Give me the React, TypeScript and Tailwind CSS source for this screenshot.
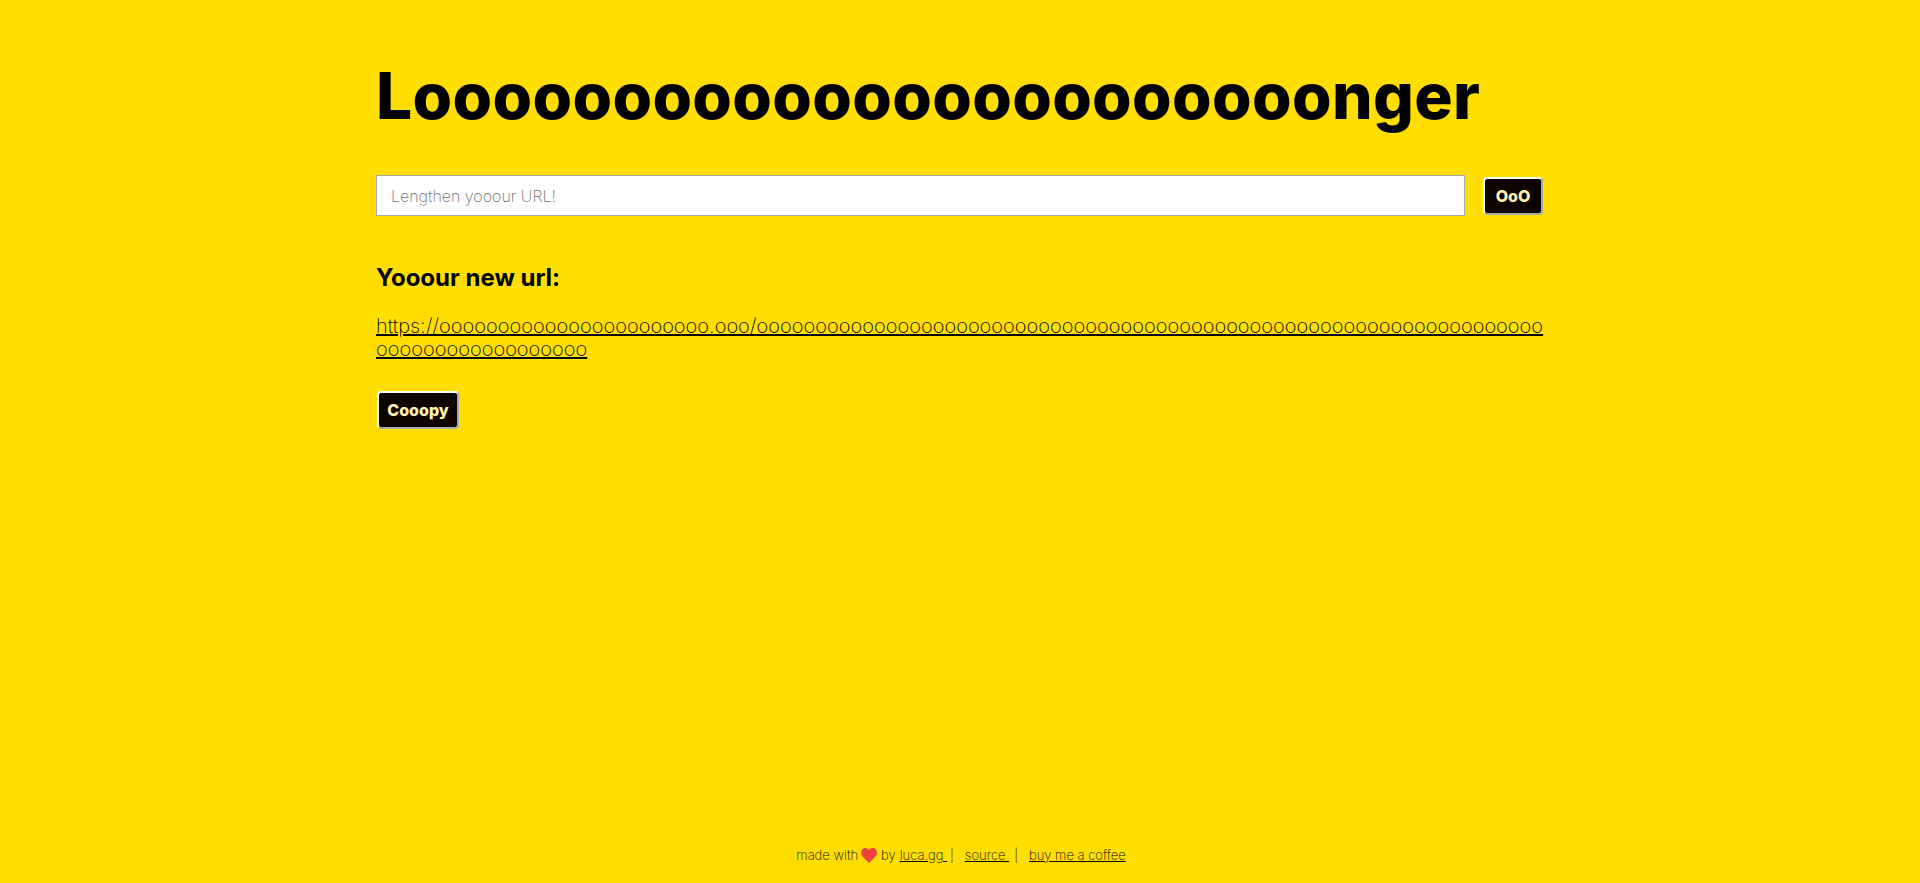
export default function App() {
  const f = { fontFamily: "Inter, sans-serif" };
  const url = "https://" + "o".repeat(23) + ".ooo/" + "o".repeat(85);
  return (
    <div style={f} className="min-h-[883px] bg-[#ffde00] text-black flex flex-col items-center">
      <main className="w-[1168px] flex-1">
        <h1 className="mt-[49px] text-[64px] leading-[94px] font-extrabold tracking-[0.35px] whitespace-nowrap">Looooooooooooooooooooooonger</h1>
        <div className="mt-[32px] flex items-center">
          <input
            readOnly
            placeholder="Lengthen yooour URL!"
            className="w-[1089px] h-[41px] bg-white border border-[#a9a9a9] px-[14px] text-[16px] font-extralight placeholder:text-[#707070] outline-none"
          />
          <button className="ml-[18px] w-[60px] h-[38px] bg-[#0f0500] text-[#fff3b0] font-extrabold text-[16px] rounded-[4px] border-2 border-t-white border-l-white border-r-[#a9a9a9] border-b-[#a9a9a9]">OoO</button>
        </div>
        <h2 className="mt-[46px] text-[24px] leading-[32px] font-bold">Yooour new url:</h2>
        <p className="mt-[21px] text-[20px] leading-[23px] font-extralight tracking-[0.02px] break-all">
          <a href="#" className="underline">{url}</a>
        </p>
        <button className="mt-[30px] ml-[1px] w-[82px] h-[38px] bg-[#0f0500] text-[#fff3b0] font-extrabold text-[16px] rounded-[4px] border-2 border-t-white border-l-white border-r-[#a9a9a9] border-b-[#a9a9a9]">Cooopy</button>
      </main>
      <footer className="h-[37px] pl-[2px] flex items-start text-[13px] font-extralight text-black">
        <span>made with</span>
        <svg viewBox="0 0 16 15" width="16" height="15" className="mx-[3px] mt-[2px]"><path fill="#f04040" d="M8 15 1.2 8.2C-1 5.8.2 0 4.2 0 5.8 0 7.2.8 8 2.2 8.8.8 10.2 0 11.8 0c4 0 5.2 5.8 3 8.2z"/></svg>
        <span className="ml-[1px]">by</span>
        <a href="#" className="underline whitespace-pre ml-[4px]">luca.gg </a>
        <span className="ml-[3px] mr-[11px]">|</span>
        <a href="#" className="underline whitespace-pre">source </a>
        <span className="ml-[5px] mr-[11px]">|</span>
        <a href="#" className="underline">buy me a coffee</a>
      </footer>
    </div>
  );
}
